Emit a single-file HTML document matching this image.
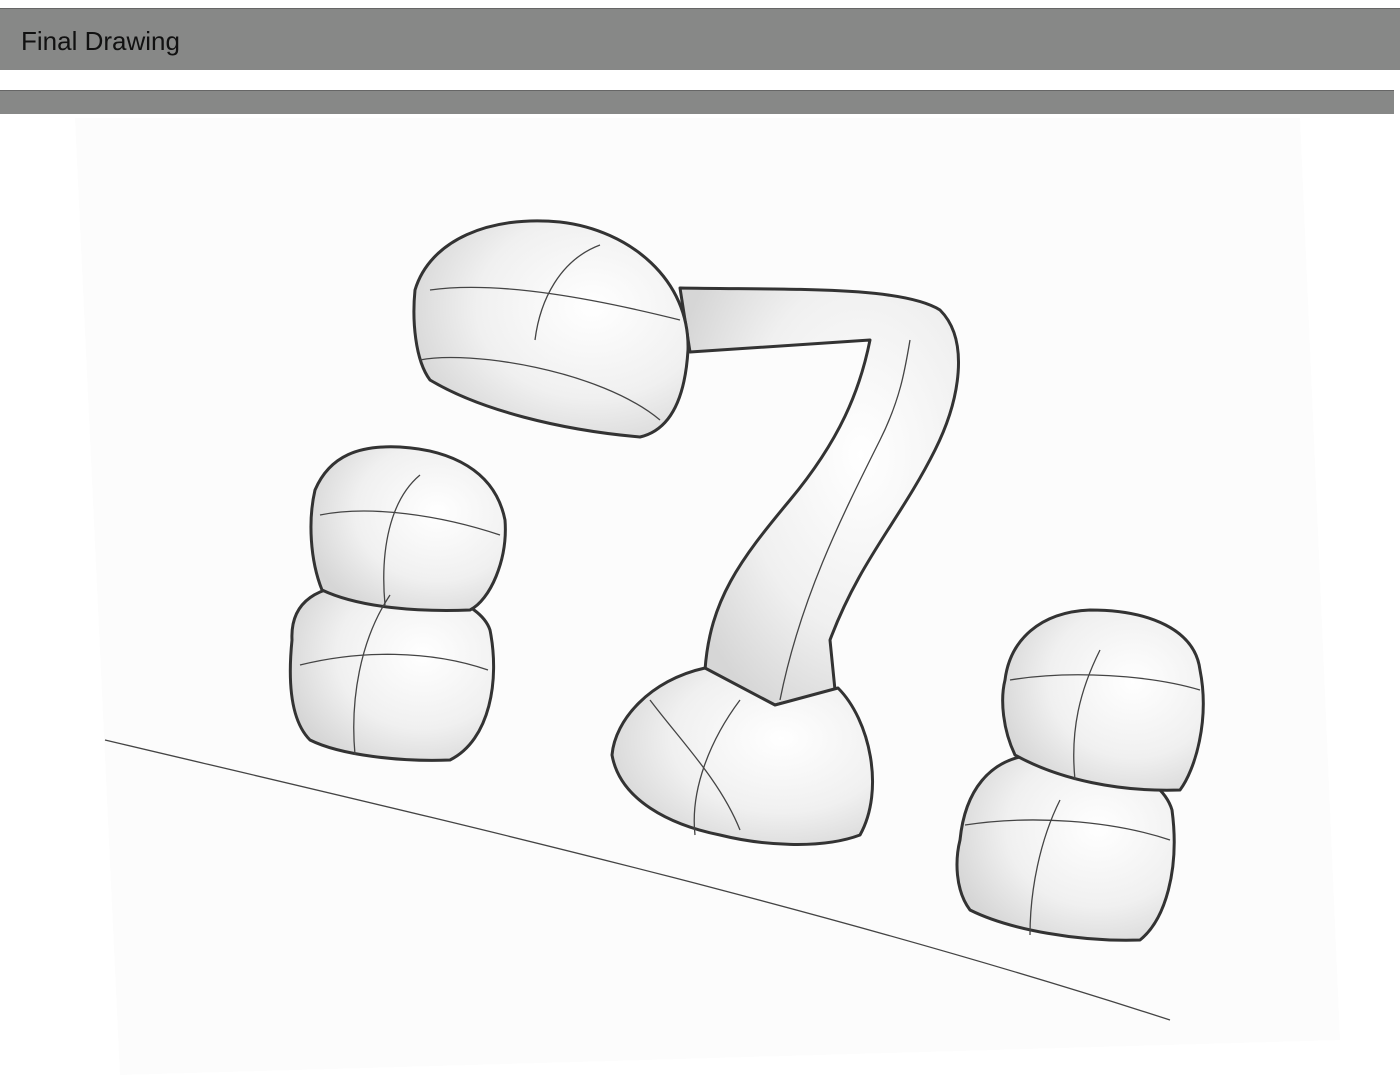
<!DOCTYPE html>
<html><head><meta charset="utf-8"><style>
body{margin:0;width:1400px;height:1082px;background:#fff;position:relative;overflow:hidden;font-family:"Liberation Sans",sans-serif}
.b1{position:absolute;left:0;top:8px;width:1400px;height:62px;background:#878887;border-top:1px solid #666;box-sizing:border-box}
.b1 span{position:absolute;left:21px;top:17px;font-size:26px;color:#111}
.b2{position:absolute;left:0;top:90px;width:1394px;height:24px;background:#878887;border-top:1px solid #666;box-sizing:border-box}
svg{position:absolute;left:0;top:0}
</style></head><body>
<div class="b1"><span>Final Drawing</span></div>
<div class="b2"></div>
<svg width="1400" height="1082" viewBox="0 0 1400 1082">
<defs><radialGradient id="g" cx="0.65" cy="0.4" r="0.7"><stop offset="0" stop-color="#fff"/><stop offset="0.6" stop-color="#f0f0f0"/><stop offset="1" stop-color="#d6d6d6"/></radialGradient></defs>
<polygon points="75,118 1300,118 1340,1040 120,1075" fill="#fcfcfc"/>
<g fill="url(#g)" stroke="#333" stroke-width="3" stroke-linejoin="round">
<path d="M680,288 C780,290 900,285 940,310 C970,340 960,400 935,450 C900,520 860,560 830,640 L835,690 L775,705 L705,670 C710,600 740,560 790,500 C840,440 860,390 870,340 L690,352 Z"/>
<path d="M705,668 L775,705 L838,688 C870,720 885,790 860,835 C820,850 760,845 720,835 C670,825 620,800 612,755 C615,720 650,680 705,668 Z"/>
<path d="M415,290 C430,240 490,215 560,222 C630,230 690,280 688,350 C685,400 670,430 640,437 C560,430 480,410 430,380 C415,360 412,320 415,290 Z"/>
<path d="M292,640 C290,600 320,585 360,585 C420,582 480,600 490,630 C500,680 490,740 450,760 C400,762 340,755 310,740 C290,720 288,680 292,640 Z"/>
<path d="M315,490 C330,455 360,445 400,447 C450,450 495,470 505,520 C508,560 490,600 470,610 C420,612 360,608 322,590 C310,560 308,520 315,490 Z"/>
<path d="M960,840 C965,790 990,760 1030,755 C1090,750 1160,770 1172,810 C1180,870 1165,920 1140,940 C1080,942 1010,930 970,910 C955,890 955,860 960,840 Z"/>
<path d="M1005,680 C1010,640 1040,612 1090,610 C1150,610 1195,630 1200,670 C1210,720 1195,770 1180,790 C1120,792 1060,780 1015,755 C1003,730 1000,700 1005,680 Z"/>
</g>
<g fill="none" stroke="#444" stroke-width="1.3">
<path d="M420,360 C470,350 600,370 660,420"/><path d="M430,290 C500,280 600,300 680,320"/><path d="M600,245 C560,260 540,300 535,340"/>
<path d="M300,665 C360,650 430,650 488,670"/><path d="M390,595 C360,640 350,700 355,755"/>
<path d="M320,515 C370,505 440,515 500,535"/><path d="M420,475 C390,500 380,550 385,605"/>
<path d="M650,700 C680,740 720,780 740,830"/><path d="M740,700 C710,740 690,790 695,835"/>
<path d="M780,700 C800,600 840,520 880,440 C900,400 905,370 910,340"/>
<path d="M965,825 C1030,815 1110,820 1170,840"/><path d="M1060,800 C1040,840 1030,890 1030,935"/>
<path d="M1010,680 C1070,670 1150,675 1200,690"/><path d="M1100,650 C1080,690 1070,730 1075,780"/>
<path d="M105,740 C400,810 800,900 1170,1020"/>
</g>
</svg>
</body></html>
